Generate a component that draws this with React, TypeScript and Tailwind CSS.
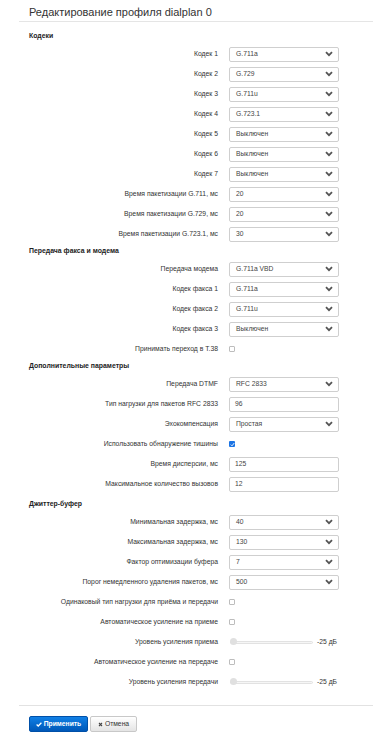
import React from 'react';

type Row =
  | { kind: 'select'; label: string; value: string }
  | { kind: 'input'; label: string; value: string }
  | { kind: 'check'; label: string; checked?: boolean }
  | { kind: 'slider'; label: string; value: string };

const sections: { title: string; extra?: string; rows: Row[] }[] = [
  {
    title: 'Кодеки',
    rows: [
      { kind: 'select', label: 'Кодек 1', value: 'G.711a' },
      { kind: 'select', label: 'Кодек 2', value: 'G.729' },
      { kind: 'select', label: 'Кодек 3', value: 'G.711u' },
      { kind: 'select', label: 'Кодек 4', value: 'G.723.1' },
      { kind: 'select', label: 'Кодек 5', value: 'Выключен' },
      { kind: 'select', label: 'Кодек 6', value: 'Выключен' },
      { kind: 'select', label: 'Кодек 7', value: 'Выключен' },
      { kind: 'select', label: 'Время пакетизации G.711, мс', value: '20' },
      { kind: 'select', label: 'Время пакетизации G.729, мс', value: '20' },
      { kind: 'select', label: 'Время пакетизации G.723.1, мс', value: '30' },
    ],
  },
  {
    title: 'Передача факса и модема',
    rows: [
      { kind: 'select', label: 'Передача модема', value: 'G.711a VBD' },
      { kind: 'select', label: 'Кодек факса 1', value: 'G.711a' },
      { kind: 'select', label: 'Кодек факса 2', value: 'G.711u' },
      { kind: 'select', label: 'Кодек факса 3', value: 'Выключен' },
      { kind: 'check', label: 'Принимать переход в T.38' },
    ],
  },
  {
    title: 'Дополнительные параметры',
    rows: [
      { kind: 'select', label: 'Передача DTMF', value: 'RFC 2833' },
      { kind: 'input', label: 'Тип нагрузки для пакетов RFC 2833', value: '96' },
      { kind: 'select', label: 'Эхокомпенсация', value: 'Простая' },
      { kind: 'check', label: 'Использовать обнаружение тишины', checked: true },
      { kind: 'input', label: 'Время дисперсии, мс', value: '125' },
      { kind: 'input', label: 'Максимальное количество вызовов', value: '12' },
    ],
  },
  {
    title: 'Джиттер-буфер',
    extra: 'mt-[3px]',
    rows: [
      { kind: 'select', label: 'Минимальная задержка, мс', value: '40' },
      { kind: 'select', label: 'Максимальная задержка, мс', value: '130' },
      { kind: 'select', label: 'Фактор оптимизации буфера', value: '7' },
      { kind: 'select', label: 'Порог немедленного удаления пакетов, мс', value: '500' },
      { kind: 'check', label: 'Одинаковый тип нагрузки для приёма и передачи' },
      { kind: 'check', label: 'Автоматическое усиление на приеме' },
      { kind: 'slider', label: 'Уровень усиления приема', value: '-25 дБ' },
      { kind: 'check', label: 'Автоматическое усиление на передаче' },
      { kind: 'slider', label: 'Уровень усиления передачи', value: '-25 дБ' },
    ],
  },
];

function Chevron() {
  return (
    <svg width="8" height="6" viewBox="0 0 8 6" className="shrink-0">
      <path d="M1 1.2 L4 4.2 L7 1.2" fill="none" stroke="#555" strokeWidth="1.8" />
    </svg>
  );
}

function Control({ row }: { row: Row }) {
  if (row.kind === 'select') {
    return (
      <div className="w-[110px] h-[15px] flex items-center justify-between pl-[6px] pr-[5px] border border-[#cfcfcf] rounded-[2px] bg-white">
        <span className="text-[6.75px] text-[#444]">{row.value}</span>
        <Chevron />
      </div>
    );
  }
  if (row.kind === 'input') {
    return (
      <div className="w-[110px] h-[15px] flex items-center pl-[5px] border border-[#cfcfcf] rounded-[2px] bg-white">
        <span className="text-[6.75px] text-[#444]">{row.value}</span>
      </div>
    );
  }
  if (row.kind === 'check') {
    return row.checked ? (
      <div className="w-[6px] h-[6px] rounded-[1px] bg-[#1b74e4] flex items-center justify-center">
        <svg width="5" height="5" viewBox="0 0 5 5">
          <path d="M0.8 2.6 L2 3.8 L4.3 1" fill="none" stroke="#fff" strokeWidth="0.9" />
        </svg>
      </div>
    ) : (
      <div className="w-[6px] h-[6px] rounded-[1px] border border-[#bdbdbd] bg-white" />
    );
  }
  return (
    <div className="flex items-center">
      <div className="relative w-[83px] h-[3px] ml-[1px] rounded-full border border-[#e2e2e2] bg-[#f6f6f6]">
        <div className="absolute left-[-1px] top-[-3.5px] w-[7px] h-[7px] rounded-full bg-[#e0e0e0]" />
      </div>
      <span className="ml-[4px] text-[6.75px] text-[#333]">{row.value}</span>
    </div>
  );
}

export default function App() {
  return (
    <div className="w-[373px] min-h-[749px] bg-white text-[#333]" style={{ fontFamily: '"Liberation Sans", Arial, sans-serif' }}>
      <div className="ml-[19px]">
        <div className="h-[22px] border-b border-[#e5e5e5] pl-[10px] pt-[5px]">
          <h1 className="text-[11px] leading-[14px] text-[#333]">Редактирование профиля dialplan 0</h1>
        </div>

        <div className="pt-[7px]">
          {sections.map((s) => (
            <div key={s.title} className={s.extra}>
              <div className="h-[15px] flex items-center pl-[10px] text-[6.9px] font-bold text-[#222]">{s.title}</div>
              {s.rows.map((r) => (
                <div key={r.label} className="h-[20px] flex items-center">
                  <div className="w-[200px] pr-[1px] text-right text-[6.8px] text-[#333]">{r.label}</div>
                  <div className="ml-[10px]">
                    <Control row={r} />
                  </div>
                </div>
              ))}
            </div>
          ))}
        </div>

        <div className="mt-[13px] border-t border-[#e2e2e2] pt-[10px] pl-[10px] flex gap-[2px]">
          <button className="h-[16px] w-[59px] flex items-center justify-center gap-[2px] rounded-[2px] border border-[#0050a8] bg-gradient-to-b from-[#1180e6] to-[#0058b8] text-white text-[6.75px] font-bold">
            <svg width="6" height="5" viewBox="0 0 6 5">
              <path d="M0.6 2.5 L2.2 4 L5.4 0.8" fill="none" stroke="#fff" strokeWidth="1.3" />
            </svg>
            Применить
          </button>
          <button className="h-[16px] w-[47px] flex items-center justify-center gap-[2px] rounded-[2px] border border-[#c8c8c8] bg-gradient-to-b from-[#ffffff] to-[#e4e4e4] text-[#333] text-[6.75px]">
            <svg width="5" height="5" viewBox="0 0 5 5">
              <path d="M1 1 L4 4 M4 1 L1 4" fill="none" stroke="#444" strokeWidth="1.1" />
            </svg>
            Отмена
          </button>
        </div>
      </div>
    </div>
  );
}
